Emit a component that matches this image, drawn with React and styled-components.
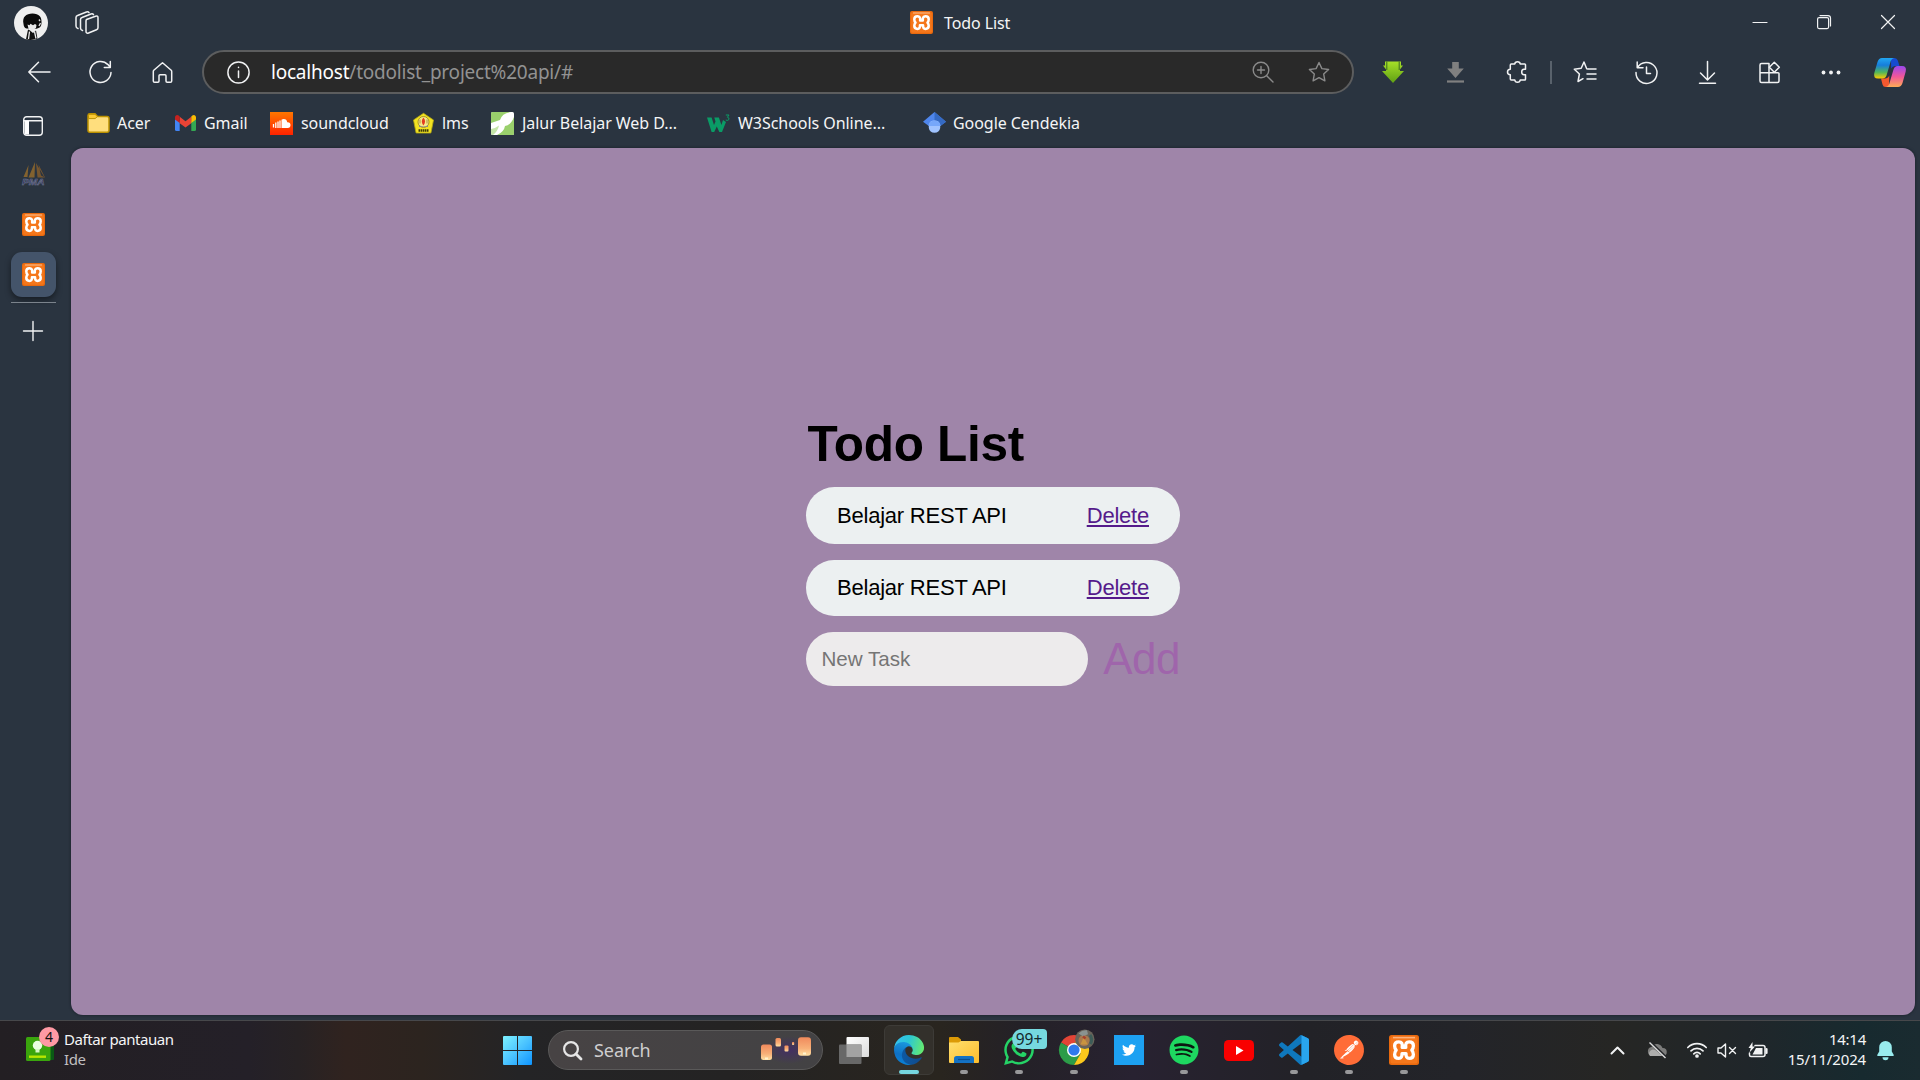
import React from "react";
import styled, { createGlobalStyle } from "styled-components";
import { FaTwitter, FaWhatsapp } from "react-icons/fa";
import { SiSpotify, SiPostman } from "react-icons/si";

const ui = `"Noto Sans", "Open Sans", sans-serif`;
const page = `"Liberation Sans", Arial, sans-serif`;

const GlobalStyle = createGlobalStyle`
  * { box-sizing: border-box; }
  body { margin: 0; background: #2a3440; overflow: hidden; }
  svg { display: block; flex: none; overflow: visible; }
`;

const Screen = styled.div`
  width: 1920px;
  height: 1080px;
  display: flex;
  flex-direction: column;
  font-family: ${ui};
  color: #fff;
`;

const Browser = styled.div`
  height: 1020px;
  display: flex;
  flex-direction: column;
  background: #2a3440;
`;

const TitleBar = styled.header`
  height: 44px;
  display: grid;
  grid-template-columns: 910px 1fr 192px;
  align-items: center;
`;

const TitleLeft = styled.div`
  display: flex;
  align-items: center;
  gap: 27px;
  padding: 2px 0 0 14px;
`;

const Label = styled.span`
  font-size: ${(p) => p.$size || 16}px;
  letter-spacing: ${(p) => p.$ls || 0}px;
  color: ${(p) => p.$color || "#f4f5f6"};
  line-height: 22px;
  white-space: nowrap;
`;

const WindowTitle = styled.div`
  display: flex;
  align-items: center;
  gap: 11px;
  padding-top: 1px;
`;

const WindowButtons = styled.div`
  display: grid;
  grid-template-columns: repeat(3, 64px);
  justify-items: center;
`;

const Toolbar = styled.nav`
  height: 56px;
  display: flex;
  align-items: center;
  padding-left: 8px;
`;

const Slot = styled.div`
  width: ${(p) => p.$w || 61.5}px;
  height: 44px;
  display: flex;
  align-items: center;
  justify-content: center;
  flex: none;
`;

const AddressBar = styled.div`
  width: 1152px;
  height: 44px;
  margin: 0 8px 0 9.5px;
  border: 2px solid #5c5d5e;
  border-radius: 22px;
  background: #292929;
  display: flex;
  align-items: center;
  padding: 0 22px 0 23px;
`;

const Url = styled.div`
  flex: 1;
  padding-left: 21px;
  font-size: 19px;
  letter-spacing: ${(p) => p.$ls}px;
  line-height: 26px;
  color: #929292;
  white-space: nowrap;
  b { font-weight: 400; color: #fff; }
`;

const AddressTools = styled.div`
  display: flex;
  gap: 34px;
  align-items: center;
`;

const Divider = styled.div`
  width: 2px;
  height: 23px;
  margin: 0 2px 0 2px;
  background: #59626c;
`;

const Body = styled.div`
  flex: 1;
  display: flex;
  min-height: 0;
`;

const Sidebar = styled.aside`
  width: 71px;
  padding: 0 15px 0 11px;
  display: flex;
  flex-direction: column;
`;

const SideSlot = styled.div`
  height: ${(p) => p.$h}px;
  padding-right: ${(p) => p.$shift || 0}px;
  display: flex;
  align-items: center;
  justify-content: center;
`;

const ActiveTab = styled.div`
  width: 45px;
  height: 45px;
  border-radius: 11px;
  background: #44546a;
  box-shadow: 0 3px 6px rgba(0, 0, 0, 0.45);
  display: flex;
  align-items: center;
  justify-content: center;
`;

const SideLine = styled.div`
  height: 1px;
  margin: 5px 0 0;
  background: #7b838c;
`;

const MainColumn = styled.div`
  flex: 1;
  display: flex;
  flex-direction: column;
`;

const Bookmarks = styled.div`
  height: 48px;
  padding: 0 0 2px 16px;
  display: flex;
  align-items: center;
`;

const Bookmark = styled.div`
  width: ${(p) => p.$w}px;
  display: flex;
  align-items: center;
  gap: ${(p) => p.$gap || 7}px;
`;

const Viewport = styled.main`
  width: 1844px;
  height: 867px;
  border-radius: 12px;
  background: #9f85a9;
  box-shadow: 0 0 3px rgba(10, 14, 20, 0.6);
  padding-top: 267px;
  font-family: ${page};
  color: #000;
`;

const Todo = styled.section`
  width: 374px;
  margin: 0 auto 0 735px;
  display: flex;
  flex-direction: column;
  gap: 16px;
`;

const Heading = styled.h1`
  margin: 0 0 -1px 1.5px;
  font-size: 49.5px;
  letter-spacing: -0.3px;
  line-height: 57px;
  font-weight: 700;
  white-space: nowrap;
`;

const TodoItem = styled.div`
  height: 56.5px;
  border-radius: 29px;
  background: #ecf0f1;
  padding: 1px 31px 0 31px;
  display: flex;
  align-items: center;
  justify-content: space-between;
  font-size: 22px;
  letter-spacing: -0.22px;
`;

const DeleteLink = styled.a`
  color: #551a8b;
  text-decoration: underline;
`;

const NewTaskRow = styled.form`
  display: flex;
  align-items: center;
  justify-content: space-between;
  height: 54px;
`;

const NewTask = styled.input`
  width: 282px;
  height: 54px;
  border: 0;
  border-radius: 27px;
  background: #edebec;
  padding: 0 15.5px;
  font-family: ${page};
  font-size: 20.6px;
  &::placeholder { color: #757575; opacity: 1; }
`;

const AddButton = styled.button`
  border: 0;
  padding: 0;
  background: none;
  font-family: ${page};
  font-size: 44px;
  letter-spacing: -0.5px;
  line-height: 54px;
  color: #9f65ab;
`;

const Taskbar = styled.footer`
  height: 60px;
  border-top: 1px solid #47484b;
  padding-bottom: 1px;
  background: linear-gradient(90deg, #231f23 0%, #242028 13%, #272224 15.5%, #30231f 18%, #2c241f 22%, #242426 27%, #242323 38%, #29251f 49%, #242127 53%, #282231 59%, #222227 68%, #232429 76%, #262624 84%, #20262a 91%, #172a2f 97%, #1a2b30 100%);
  display: flex;
  align-items: center;
`;

const Widget = styled.div`
  width: 490px;
  padding-left: 26px;
  display: flex;
  align-items: center;
`;

const WidgetIcon = styled.div`
  position: relative;
  width: 38px;
  height: 24px;
  margin-bottom: 2px;
`;

const CountBadge = styled.span`
  position: absolute;
  left: 13px;
  top: -10px;
  width: 20px;
  height: 20px;
  border-radius: 50%;
  background: #ff99a4;
  color: #111;
  font-size: 14px;
  line-height: 20px;
  text-align: center;
`;

const WidgetText = styled.div`
  display: flex;
  flex-direction: column;
  margin-bottom: 3px;
  span { line-height: 20px; }
`;

const Search = styled.div`
  width: 275px;
  height: 40px;
  margin: 0 3.5px 0 3px;
  border: 1px solid #5a5959;
  border-radius: 20px;
  background: linear-gradient(90deg, #474344, #434244);
  display: flex;
  align-items: center;
  padding: 0 9px 0 14px;
  gap: 12px;
`;

const SearchText = styled.span`
  flex: 1;
  padding-bottom: 1px;
  font-size: 18px;
  line-height: 24px;
  letter-spacing: ${(p) => p.$ls}px;
  color: #cfcecf;
`;

const TaskButton = styled.div`
  position: relative;
  width: 55px;
  height: 50px;
  display: flex;
  align-items: center;
  justify-content: center;
  &::before {
    content: "";
    position: absolute;
    inset: 0 2.5px;
    border-radius: 6px;
    border: 1px solid ${(p) => (p.$active ? "#3d3b37" : "transparent")};
    background: ${(p) => (p.$active ? "#33302b" : "transparent")};
  }
  &::after {
    content: "";
    position: absolute;
    bottom: 1px;
    width: ${(p) => (p.$active ? 20 : p.$running ? 8 : 0)}px;
    height: 4px;
    border-radius: 2px;
    background: ${(p) => (p.$active ? "#76d6df" : "#98989a")};
  }
  > svg { position: relative; }
`;

const UnreadBadge = styled.span`
  position: absolute;
  left: 20px;
  top: 4px;
  width: 35px;
  height: 20px;
  border-radius: 10px 4px 4px 10px;
  background: #76d9df;
  color: #14282a;
  font-size: 15.5px;
  letter-spacing: -0.1px;
  line-height: 20px;
  text-align: center;
`;

const Tray = styled.div`
  margin-left: auto;
  padding-right: 26px;
  display: flex;
  align-items: center;
`;

const TrayItem = styled.div`
  width: ${(p) => p.$w}px;
  display: flex;
  justify-content: center;
`;

const Clock = styled.div`
  width: 87px;
  margin: 0 11px 3px 0;
  display: flex;
  flex-direction: column;
  align-items: flex-end;
  span { line-height: 20px; }
`;

function Svg({ w = 24, h, box, sw = 1.6, color = "#f1f2f3", children }) {
  return (
    <svg
      width={w}
      height={h || w}
      viewBox={box || `0 0 ${w} ${h || w}`}
      fill="none"
      stroke={color}
      strokeWidth={sw}
      strokeLinecap="round"
      strokeLinejoin="round"
    >
      {children}
    </svg>
  );
}

function Xampp({ size = 23 }) {
  return (
    <svg width={size} height={size} viewBox="0 0 30 30">
      <rect width="30" height="30" rx="2.5" fill="#e8690e" />
      <rect x="1.5" y="1.5" width="27" height="27" rx="2" fill="#f5771b" />
      <path d="M4 2.6h22" stroke="#fbb27c" strokeWidth="1.6" />
      <path
        d="M13.200 12.400Q14 6.800 9.800 6.800Q5.600 6.800 5.600 10.800Q5.600 13.500 7.200 15.200Q5.600 17 5.600 19.400Q5.600 23.400 9.800 23.400Q13.200 23.400 13 18.600H17Q16.800 23.400 20.200 23.400Q24.400 23.400 24.400 19.400Q24.400 17 22.800 15.200Q24.400 13.500 24.400 10.800Q24.400 6.800 20.200 6.800Q16 6.800 16.800 12.400z"
        fill="none"
        stroke="#fff"
        strokeWidth="3.300"
        strokeLinejoin="round"
      />
    </svg>
  );
}

function Avatar() {
  return (
    <svg width="34" height="34" viewBox="0 0 34 34">
      <circle cx="17" cy="17" r="17" fill="#efefef" />
      <path d="M9.5 18C8 11 12 7.500 18.500 7.500S28 11 27.500 17c0 3-1.500 4.500-3 5l-2 .7-10-.2c-2-.6-2.700-2-3-4.500z" fill="#0b0b0b" />
      <path d="M13.500 18.500l2 .8 1-1.500 2.500 1.500 2-1.300 1.500 1-.5 3-3.500 2.200-4-1.500z" fill="#e9e9e9" />
      <path d="M14 23.500l-2 9.800q5 1.400 11.500-.5L22 24.500l-3 2.500-3-2.500z" fill="#111" />
      <path d="M15.500 25.500l-1 7.500M20.500 25.500l1.500 7" stroke="#eee" strokeWidth="1.300" />
      <path d="M25 13.500l1 1.500M26.500 17l-1.500 3" stroke="#ddd" strokeWidth="1.400" />
    </svg>
  );
}

const StarPath = "M11 1.500l2.900 6.100 6.700.9-4.900 4.600 1.200 6.700L11 16.600l-5.900 3.200 1.200-6.700L1.400 8.500l6.700-.9z";

function Folder() {
  return (
    <svg width="23" height="20" viewBox="0 0 23 20">
      <path d="M1 3.500V2.500A1.800 1.800 0 0 1 2.800.8H8l2.600 2.700H20a2 2 0 0 1 2 2v11.700a2 2 0 0 1-2 2H3a2 2 0 0 1-2-2z" fill="#ffde7d" stroke="#bd9200" strokeWidth="1.500" />
      <path d="M1.500 5.600h6.600l2.400-2.100L8 1.300H2.800L1.500 2.500z" fill="#fbc935" stroke="#bd9200" strokeWidth="1" />
    </svg>
  );
}

function Gmail() {
  return (
    <svg width="21" height="16" viewBox="0 0 21 16">
      <path d="M0 4v10.500Q0 16 1.500 16H4.700V6.500z" fill="#4285f4" />
      <path d="M21 4v10.500q0 1.500-1.500 1.500h-3.200V6.500z" fill="#34a853" />
      <path d="M4.700 1.800L10.500 6.300l5.800-4.500v6.400l-5.800 4.400-5.800-4.400z" fill="#ea4335" />
      <path d="M0 2.400C0 .4 2.100-.7 3.700.6l1 .8v6.700L0 4.600z" fill="#c5221f" />
      <path d="M21 2.400c0-2-2.100-3.100-3.700-1.800l-1 .8v6.700L21 4.600z" fill="#fbbc04" />
    </svg>
  );
}

function SoundCloud() {
  return (
    <svg width="23" height="23" viewBox="0 0 23 23">
      <defs>
        <linearGradient id="sc" x1="0" y1="0" x2="0" y2="1">
          <stop offset="0" stopColor="#ff7700" />
          <stop offset="1" stopColor="#ff2200" />
        </linearGradient>
      </defs>
      <rect width="23" height="23" fill="url(#sc)" />
      <path d="M11.500 16V7.800q1-.8 2.200-.8 3 0 3.500 3.200 3.300-.3 3.300 2.900 0 2.900-2.800 2.900z" fill="#fff" />
      <path d="M3.500 12v3.500M5.800 10.500V16M8 9.500V16M10 8.500V16" stroke="#fff" strokeWidth="1.300" />
    </svg>
  );
}

function Campus() {
  return (
    <svg width="21" height="21" viewBox="0 0 21 21">
      <path d="M10.500.3L20.500 7l-2.600 13H3.100L.5 7z" fill="#f3e322" stroke="#b5a912" strokeWidth=".8" strokeLinejoin="round" />
      <circle cx="10.500" cy="9" r="5.500" fill="#f7e98a" stroke="#a08a20" strokeWidth=".9" />
      <path d="M10.500 4.500c2.200 2.500 2 5.500-.1 8-2-2.500-2.300-5.500.1-8z" fill="#e43b1f" />
      <path d="M7 6.500v4M14 6.500v4" stroke="#b9a24a" strokeWidth="1.200" />
      <path d="M6 12q4.500 3 9 0v2h-9z" fill="#8a8a86" />
      <path d="M5.500 17.500h10" stroke="#3a3708" strokeWidth="2.400" strokeDasharray="1.600 .5" />
    </svg>
  );
}

function Dicoding() {
  return (
    <svg width="23" height="23" viewBox="0 0 23 23">
      <rect width="23" height="23" rx="1.500" fill="#fff" />
      <path d="M0 1.500Q0 0 1.500 0H20q-9 1-11 8L0 11z" fill="#9ad06c" />
      <path d="M23 5v16.500q0 1.500-1.500 1.500H6q7-3 8-9 6-1 9-9z" fill="#9ad06c" />
      <path d="M0 17q5-1 8-3.500Q7 19 2 23h-.5Q0 23 0 21.500z" fill="#c5e6a8" />
    </svg>
  );
}

function W3() {
  return (
    <svg width="23" height="19" viewBox="0 0 23 19">
      <path d="M0 3.500h4.600l2.400 7.500 1.500-3.500-1.200-4h4.600l2.500 7.500 1.600-5 3 2-4 10h-2.700l-2.500-5.500L7.200 18H4.600z" fill="#0a9b66" />
      <path d="M18.800 1h3.200l-1.600 2.300q2 .2 1.600 2-.8 1.800-3.200.8" fill="none" stroke="#0a9b66" strokeWidth="1" />
    </svg>
  );
}

function Scholar() {
  return (
    <svg width="23" height="22" viewBox="0 0 23 22">
      <path d="M11.500 0L0 9.800l5.500 4 6-4.300 6 4.300 5.500-4z" fill="#4f86ec" />
      <path d="M11.500 0v10l6 4 5.500-4.200z" fill="#356ac3" />
      <path d="M5.800 13a5.800 5.500 0 0 1 11.400 0v3a5.800 5.800 0 0 1-11.400 0z" fill="#a0c3ff" />
      <path d="M5.500 14a6 5.500 0 0 1 12 0z" fill="#76a7fa" />
    </svg>
  );
}

function Sails() {
  return (
    <svg width="23" height="23" viewBox="0 0 23 23">
      <path d="M6.500 3L1.500 15h4zM13 0L6.500 15.500h6z" fill="#83622f" />
      <path d="M14 1l1.500 14.500h7zM16.500 2.500l6.500 13-4-2z" fill="#76562f" />
      <text x="0" y="22.500" fontFamily="Liberation Sans, sans-serif" fontSize="9.500" fontWeight="700" fontStyle="italic" textLength="22.500" lengthAdjust="spacingAndGlyphs" fill="#292f55" stroke="#777c96" strokeWidth=".5">PMA</text>
    </svg>
  );
}

function Copilot() {
  return (
    <svg width="32" height="29" viewBox="0 0 32 29">
      <defs>
        <linearGradient id="cpa" x1="0" y1="0" x2="0" y2="1">
          <stop offset="0" stopColor="#22a7f2" />
          <stop offset=".35" stopColor="#167ddb" />
          <stop offset=".7" stopColor="#52b759" />
          <stop offset="1" stopColor="#ffcb00" />
        </linearGradient>
        <linearGradient id="cpb" x1="0" y1="0" x2="0" y2="1">
          <stop offset="0" stopColor="#9a48ef" />
          <stop offset=".5" stopColor="#f0569a" />
          <stop offset="1" stopColor="#ffac55" />
        </linearGradient>
      </defs>
      <path d="M17 0h3.500q2.500 0 3.300 2.500L25.500 8h-4.300q-3 0-4 2.500z" fill="#164bd0" />
      <path d="M15 29h-3.500q-2.300 0-3-2.500L7 20.500h4q3 0 4.300-3z" fill="#f4582f" />
      <path d="M8 0h12q-2.300.3-3.200 3L12.500 17.500Q11.500 20.500 8.500 20.500H4Q-1 20.500.3 15L3.500 4Q4.800 0 8 0z" fill="url(#cpa)" />
      <path d="M24 29H12q2.300-.3 3.200-3l4.300-14.500q1-3.500 4-3.500H28q5 0 3.700 5.500L28.500 25Q27.200 29 24 29z" fill="url(#cpb)" />
    </svg>
  );
}

function WindowsLogo() {
  return (
    <svg width="29" height="29" viewBox="0 0 29 29">
      <defs>
        <linearGradient id="win" x1="0" y1="0" x2="1" y2="1">
          <stop offset="0" stopColor="#7df2ff" />
          <stop offset=".5" stopColor="#4cc4ff" />
          <stop offset="1" stopColor="#0e94ff" />
        </linearGradient>
      </defs>
      <path d="M1 0h13v14H0V1q0-1 1-1zM15 0h13q1 0 1 1v13H15zM0 15h14v14H1q-1 0-1-1zM15 15h14v13q0 1-1 1H15z" fill="url(#win)" />
    </svg>
  );
}

function Lanterns() {
  return (
    <svg width="52" height="26" viewBox="0 0 52 26">
      <defs>
        <linearGradient id="lan" x1="0" y1="0" x2="0" y2="1">
          <stop offset="0" stopColor="#f08a5c" />
          <stop offset=".6" stopColor="#f8b078" />
          <stop offset="1" stopColor="#ffe0a4" />
        </linearGradient>
        <radialGradient id="night">
          <stop offset="0" stopColor="#432f63" />
          <stop offset="1" stopColor="#432f63" stopOpacity="0" />
        </radialGradient>
      </defs>
      <ellipse cx="28" cy="13" rx="24" ry="14" fill="url(#night)" />
      <g fill="url(#lan)">
        <rect x="0" y="7.500" width="11" height="15.500" rx="2.500" />
        <rect x="14.500" y="1" width="5.500" height="8.500" rx="1.500" />
        <rect x="23.500" y="8.500" width="4" height="6" rx="1" />
        <rect x="31" y="5" width="2.200" height="3" rx=".8" />
        <rect x="37" y=".3" width="13" height="18.500" rx="3" />
      </g>
      <path d="M4 21.500h3M42 16.500h3" stroke="#fff3cf" strokeWidth="2" />
    </svg>
  );
}

function TaskView() {
  return (
    <svg width="30" height="27" viewBox="0 0 30 27">
      <defs>
        <linearGradient id="tv" x1="0" y1="0" x2="1" y2="1">
          <stop offset="0" stopColor="#fff" />
          <stop offset="1" stopColor="#dcdcdc" />
        </linearGradient>
      </defs>
      <rect x="7.500" y="0" width="22.500" height="20" rx="1" fill="url(#tv)" />
      <rect x="0" y="7.500" width="22.500" height="19.500" rx="1" fill="#686868" />
      <rect x="7.500" y="7.500" width="15" height="12.500" fill="#a3a3a3" />
    </svg>
  );
}

function Edge() {
  return (
    <svg width="30" height="30" viewBox="0 0 256 256">
      <defs>
        <linearGradient id="e1" x1="0" y1="0" x2="1" y2="0">
          <stop offset="0" stopColor="#0c59a4" />
          <stop offset="1" stopColor="#114a8b" />
        </linearGradient>
        <linearGradient id="e2" x1=".6" y1="0" x2=".4" y2="1">
          <stop offset="0" stopColor="#1b9de2" />
          <stop offset=".6" stopColor="#0f70c4" />
          <stop offset="1" stopColor="#0882d8" />
        </linearGradient>
        <linearGradient id="e3" x1="0" y1=".4" x2="1" y2=".6">
          <stop offset="0" stopColor="#35c1f1" />
          <stop offset=".45" stopColor="#2cc7d4" />
          <stop offset="1" stopColor="#66eb6e" />
        </linearGradient>
      </defs>
      <path d="M231 190.500c-3.400 1.800-6.900 3.400-10.500 4.700a101.700 101.700 0 0 1-35.900 6.400c-47.300 0-88.500-32.500-88.500-74.300a31.500 31.500 0 0 1 16.400-27.300c-42.800 1.800-53.800 46.400-53.800 72.500 0 73.900 68.100 81.400 82.800 81.400 7.900 0 19.800-2.300 27-4.600l1.300-.4a128.300 128.300 0 0 0 66.600-52.800 4 4 0 0 0-5.400-5.600z" fill="url(#e1)" />
      <path d="M105.700 241.400a79.200 79.200 0 0 1-22.700-21.300 80.700 80.700 0 0 1 29.500-120c3.200-1.500 8.500-4.100 15.600-4a32.400 32.400 0 0 1 25.700 13 31.900 31.900 0 0 1 6.300 18.700c0-.2 24.500-79.600-80-79.600C36.200 48.200.1 89.900.1 126.400a130.200 130.200 0 0 0 12.100 56 128 128 0 0 0 156.400 67 75.500 75.500 0 0 1-62.800-8z" fill="url(#e2)" />
      <path d="M152.300 148.900c-.8 1-3.300 2.500-3.300 5.700 0 2.600 1.700 5.200 4.800 7.300 14.400 10.100 41.700 8.700 41.800 8.700 10.700 0 21.200-2.900 30.500-8.300a61.800 61.800 0 0 0 30.400-53.100c.3-22.400-8-37.300-11.300-43.900C223.900 23.900 177.700 0 127.500 0A128 128 0 0 0 0 126.200c.5-36.500 36.800-66 80-66 3.500 0 23.500.3 42 10.100a72.600 72.600 0 0 1 30.800 29.300c6.100 10.600 7.200 24.100 7.200 29.500s-2.700 13.300-7.700 19.800z" fill="url(#e3)" />
    </svg>
  );
}

function Explorer() {
  return (
    <svg width="30" height="26" viewBox="0 0 30 26">
      <defs>
        <linearGradient id="fx" x1="0" y1="0" x2="1" y2="1">
          <stop offset="0" stopColor="#ffdf6e" />
          <stop offset="1" stopColor="#fdbd2c" />
        </linearGradient>
      </defs>
      <path d="M0 1q0-1 1-1h8l3 2.500V8H0z" fill="#dc9a06" />
      <path d="M0 5.500h9.500L12 4h17q1 0 1 1v20q0 1-1 1H1q-1 0-1-1z" fill="url(#fx)" />
      <path d="M5 26v-4.500q0-2.500 2.500-2.500h15q2.500 0 2.500 2.500V26z" fill="#1472c4" />
      <path d="M9 22.500h12" stroke="#0b4f91" strokeWidth="1.200" />
    </svg>
  );
}

function Chrome() {
  return (
    <svg width="30" height="30" viewBox="0 0 30 30">
      <path d="M15 15L2 7.500A15 15 0 0 1 28 7.500H15z" fill="#e24436" />
      <path d="M15 15L2 7.500A15 15 0 0 0 15 30l6.500-11.200z" fill="#2c9c48" />
      <path d="M28 7.500H15L21.500 18.800 15 30A15 15 0 0 0 28 7.500z" fill="#fcc81c" />
      <circle cx="15" cy="15" r="7" fill="#fff" />
      <circle cx="15" cy="15" r="5.600" fill="#2f79ec" />
      <circle cx="25.800" cy="4.200" r="9.700" fill="#69645a" />
      <circle cx="25" cy="5.500" r="5.500" fill="#a8794c" />
      <path d="M19.500-1.500q4-4 8.500-3.200l1 4-5 2z" fill="#8a9390" />
      <path d="M21.500 9.500l3.300-7.500 4 7.500z" fill="#c99440" />
      <path d="M24 1.500l2.500 2" stroke="#a5402d" strokeWidth="2.500" />
      <path d="M31 0q3 4 .5 9" stroke="#3d5c58" strokeWidth="3" fill="none" />
    </svg>
  );
}

function Twitter() {
  return (
    <svg width="30" height="30" viewBox="0 0 30 30">
      <rect width="30" height="30" fill="#1da1f2" />
      <FaTwitter x="8" y="8" size="14" color="#fff" />
    </svg>
  );
}

function Spotify() {
  return (
    <svg width="30" height="30" viewBox="0 0 30 30">
      <circle cx="15" cy="15" r="12" fill="#0c1710" />
      <SiSpotify x="0.500" y="0.500" size="29" color="#1ed760" />
    </svg>
  );
}

function YouTube() {
  return (
    <svg width="30" height="21" viewBox="0 0 30 21">
      <rect width="30" height="21" rx="4.500" fill="#f90000" />
      <path d="M12 6v9l7.500-4.500z" fill="#fff" />
    </svg>
  );
}

function VsCode() {
  return (
    <svg width="30" height="30" viewBox="0 0 24 24">
      <path d="M23.150 2.587L18.210.21a1.494 1.494 0 0 0-1.705.29l-9.460 8.630-4.120-3.128a.999.999 0 0 0-1.276.057L.327 7.261A1 1 0 0 0 .326 8.740L3.899 12 .326 15.260a1 1 0 0 0 .001 1.479L1.650 17.940a.999.999 0 0 0 1.276.057l4.120-3.128 9.460 8.630a1.492 1.492 0 0 0 1.704.290l4.942-2.377A1.500 1.500 0 0 0 24 20.060V3.939a1.500 1.500 0 0 0-.850-1.352zm-5.146 14.861L10.826 12l7.178-5.448v10.896z" fill="#0f78bd" />
      <path d="M18.004.12l5.146 2.467A1.500 1.500 0 0 1 24 3.939V20.060a1.500 1.500 0 0 1-.85 1.352l-4.942 2.377-.204.080z" fill="#29a5ee" />
    </svg>
  );
}

function Postman() {
  return (
    <svg width="30" height="30" viewBox="0 0 30 30">
      <circle cx="15" cy="15" r="13" fill="#fff" />
      <SiPostman x="0" y="0" size="30" color="#ff6c37" />
    </svg>
  );
}

const bookmarks = [
  { icon: <Folder />, text: "Acer", w: 88 },
  { icon: <Gmail />, text: "Gmail", w: 95, gap: 8 },
  { icon: <SoundCloud />, text: "soundcloud", w: 143, gap: 8 },
  { icon: <Campus />, text: "lms", w: 78, gap: 8 },
  { icon: <Dicoding />, text: "Jalur Belajar Web D...", w: 216, gap: 8 },
  { icon: <W3 />, text: "W3Schools Online...", w: 216, gap: 8 },
  { icon: <Scholar />, text: "Google Cendekia", w: 170, gap: 7 },
];

const todos = ["Belajar REST API", "Belajar REST API"];

export default function App() {
  return (
    <Screen>
      <GlobalStyle />
      <Browser>
        <TitleBar>
          <TitleLeft>
            <Avatar />
            <Svg w={25} h={25} sw={1.5}>
              <path d="M11.500 8.500l9-3.300q2.500-.7 2.500 1.500v10q0 1.500-1.500 2l-8 3.300q-2.500.8-2.500-1.700V10q0-1 .5-1.500z" />
              <path d="M7.500 19.500q-2-.5-2-2.500V8.500Q5.500 7 7 6.500L16 3q1.800-.5 2.500.7" />
              <path d="M3 17.500q-2-.5-2-2.500V6.500Q1 5 2.500 4.500L11.500 1q1.800-.5 2.500.7" />
            </Svg>
          </TitleLeft>
          <WindowTitle>
            <Xampp size={23} />
            <Label $ls={-0.1}>Todo List</Label>
          </WindowTitle>
          <WindowButtons>
            <Svg w={14} sw={1.2}><path d="M0 7.500h14" /></Svg>
            <Svg w={14} sw={1.2}>
              <rect x=".6" y="2.600" width="11" height="11" rx="1.500" />
              <path d="M3 .6h8q2.500 0 2.500 2.500V11" />
            </Svg>
            <Svg w={14} sw={1.2}><path d="M.5.5l13 13M13.500.5l-13 13" /></Svg>
          </WindowButtons>
        </TitleBar>

        <Toolbar>
          <Slot><Svg w={22} sw={1.5}><path d="M22 11H.8M10.500 1.300L.8 11l9.700 9.700" /></Svg></Slot>
          <Slot><Svg w={22} sw={1.5}><path d="M22 11.500A10.500 10.500 0 1 1 19 3.600L21 6M21.300.5v6h-6" /></Svg></Slot>
          <Slot>
            <Svg w={20} h={21} sw={1.5}>
              <path d="M10.500.8L1.800 8.200Q1.300 8.700 1.300 9.500V19q0 1.300 1.300 1.300h3.300q1.100 0 1.100-1.200v-5.400q0-1 1-1h5q1 0 1 1v5.400q0 1.200 1.100 1.200h3.300q1.300 0 1.300-1.300V9.500q0-.8-.5-1.300z" />
            </Svg>
          </Slot>
          <AddressBar>
            <Svg w={23} sw={1.5}>
              <circle cx="11.500" cy="11.500" r="10.600" />
              <path d="M11.500 10v6.500M11.500 6.300v.3" />
            </Svg>
            <Url $ls={-0.22}><b>localhost</b>/todolist_project%20api/#</Url>
            <AddressTools>
              <Svg w={22} sw={1.4} color="#8a8a8a">
                <circle cx="9" cy="9" r="7.800" />
                <path d="M14.700 14.700L21 21M5.500 9h7M9 5.500v7" />
              </Svg>
              <Svg w={22} sw={1.4} color="#8a8a8a"><path d={StarPath} /></Svg>
            </AddressTools>
          </AddressBar>
          <Slot $w={62}>
            <svg width="22" height="22" viewBox="0 0 22 22">
              <defs>
                <linearGradient id="dl" x1="0" y1="0" x2="0" y2="1">
                  <stop offset="0" stopColor="#a6e028" />
                  <stop offset="1" stopColor="#5f9f14" />
                </linearGradient>
              </defs>
              <path d="M3 .5h16v4h2L18 8.500v1.500h4L11 22 0 10h4V8.500L1 4.500h2z" fill="url(#dl)" />
              <path d="M4.800.5v8.500M17.200.5v8.500" stroke="#3d6a22" strokeWidth="1" />
            </svg>
          </Slot>
          <Slot $w={62}>
            <svg width="17" height="21" viewBox="0 0 17 21">
              <path d="M5.200 0h6.600v6.500h5L8.500 16 .2 6.500h5z" fill="#808080" />
              <path d="M0 19.500h17" stroke="#808080" strokeWidth="2.200" />
            </svg>
          </Slot>
          <Slot $w={62}>
            <Svg w={21} h={22} sw={1.5}>
              <path d="M4.300 3H7.800q.2-2.200 2.700-2.200T13.200 3h4.500q.8 0 .8.800v4.500h-1.500q-2.300.2-2.300 2.700t2.300 2.700h1.500v4.500q0 .8-.8.800h-4.500q-.2 2.200-2.700 2.200T7.800 19H4.300q-1 0-1-1v-4.300Q.5 13.500.5 11t2.800-2.700V4q0-1 1-1z" />
            </Svg>
          </Slot>
          <Divider />
          <Slot>
            <Svg w={24} h={22} sw={1.5}>
              <path d="M15 8l-1.300-.3L11 1 8.200 7.300l-6.900.9 5.100 4.800L5 20.500l5-2.800M15.500 8H23M14 13h9M14 18h9" />
            </Svg>
          </Slot>
          <Slot>
            <Svg w={23} sw={1.5}>
              <path d="M2.500 6.500A10.500 10.500 0 1 1 1 11.500M2.200 1v5.800H8M11.500 6v6.500h4" />
            </Svg>
          </Slot>
          <Slot>
            <Svg w={17} h={23} sw={1.5}><path d="M8.500.5v18M1.500 12l7 7 7-7M.5 22.300h16" /></Svg>
          </Slot>
          <Slot>
            <Svg w={21} h={21} sw={1.5}>
              <path d="M10 1.500H2.500Q1 1.500 1 3v16q0 1.500 1.500 1.500h16Q20 20.500 20 19v-7.500q0-.8-1-.8H1M10 1.500v19" />
              <path d="M15.300.3l5 5-5 5-5-5z" />
            </Svg>
          </Slot>
          <Slot>
            <Svg w={20} h={4} sw={0}>
              <g fill="#f1f2f3"><circle cx="2.500" cy="2.500" r="1.900" /><circle cx="10" cy="2.500" r="1.900" /><circle cx="17.500" cy="2.500" r="1.900" /></g>
            </Svg>
          </Slot>
          <Slot $w={57}><Copilot /></Slot>
        </Toolbar>

        <Body>
          <Sidebar>
            <SideSlot $h={51} $shift={2}>
              <Svg w={20} sw={1.4}>
                <rect x=".7" y=".7" width="18.600" height="18.600" rx="3" />
                <path d="M1 4.700h18" />
                <path d="M1.500 5v12q0 1.500 1.500 1.500h3V5z" fill="#fff" stroke="none" />
              </Svg>
            </SideSlot>
            <SideSlot $h={45}><Sails /></SideSlot>
            <SideSlot $h={56}><Xampp /></SideSlot>
            <SideSlot $h={45}><ActiveTab><Xampp /></ActiveTab></SideSlot>
            <SideLine />
            <SideSlot $h={56} $shift={2}><Svg w={20} sw={1.4}><path d="M10 .5v19M.5 10h19" /></Svg></SideSlot>
          </Sidebar>
          <MainColumn>
            <Bookmarks>
              {bookmarks.map((b) => (
                <Bookmark key={b.text} $w={b.w} $gap={b.gap}>
                  {b.icon}
                  <Label $ls={-0.05}>{b.text}</Label>
                </Bookmark>
              ))}
            </Bookmarks>
            <Viewport>
              <Todo>
                <Heading>Todo List</Heading>
                {todos.map((t, i) => (
                  <TodoItem key={i}>
                    <span>{t}</span>
                    <DeleteLink href="#">Delete</DeleteLink>
                  </TodoItem>
                ))}
                <NewTaskRow>
                  <NewTask placeholder="New Task" />
                  <AddButton type="button">Add</AddButton>
                </NewTaskRow>
              </Todo>
            </Viewport>
          </MainColumn>
        </Body>
      </Browser>

      <Taskbar>
        <Widget>
          <WidgetIcon>
            <svg width="28" height="24" viewBox="0 0 28 24">
              <rect x="22" y="1" width="6" height="22" rx="1" fill="#0a5a14" />
              <rect width="24.500" height="24" rx="1.500" fill="#3aa50d" />
              <circle cx="11.500" cy="8.500" r="4.700" fill="#e9ffe0" />
              <path d="M9.500 12h4v3.500h-4z" fill="#d4f7c4" />
              <path d="M3 19.700h17" stroke="#b9e600" strokeWidth="2.400" />
            </svg>
            <CountBadge>4</CountBadge>
          </WidgetIcon>
          <WidgetText>
            <Label $size={15} $ls={-0.43}>Daftar pantauan</Label>
            <Label $size={15} $ls={-0.4} $color="#c0bfc1">Ide</Label>
          </WidgetText>
        </Widget>
        <TaskButton><WindowsLogo /></TaskButton>
        <Search>
          <Svg w={19} sw={2.2} color="#e6e6e6">
            <circle cx="8" cy="8" r="6.900" />
            <path d="M13 13l5 5" strokeWidth="2.800" />
          </Svg>
          <SearchText $ls={-0.05}>Search</SearchText>
          <Lanterns />
        </Search>
        <TaskButton><TaskView /></TaskButton>
        <TaskButton $active><Edge /></TaskButton>
        <TaskButton $running><Explorer /></TaskButton>
        <TaskButton $running>
          <FaWhatsapp size={34} color="#25d366" />
          <UnreadBadge>99+</UnreadBadge>
        </TaskButton>
        <TaskButton $running><Chrome /></TaskButton>
        <TaskButton><Twitter /></TaskButton>
        <TaskButton $running><Spotify /></TaskButton>
        <TaskButton><YouTube /></TaskButton>
        <TaskButton $running><VsCode /></TaskButton>
        <TaskButton $running><Postman /></TaskButton>
        <TaskButton $running><Xampp size={30} /></TaskButton>
        <Tray>
          <TrayItem $w={40}><Svg w={13} h={8} sw={2}><path d="M.5 7.500l6-6 6 6" /></Svg></TrayItem>
          <TrayItem $w={40}>
            <svg width="20" height="16" viewBox="0 0 20 16">
              <path d="M5 14a4.500 4.500 0 0 1-.5-8.900A6 6 0 0 1 15.500 6a4 4 0 0 1 .5 8z" fill="#7c7c7b" />
              <path d="M3 14a4 4 0 0 1 5-6l9 6z" fill="#adadac" />
              <path d="M3 0l16 15.500" stroke="#25272a" strokeWidth="3" />
              <path d="M2.500.5L18.500 16" stroke="#ddd" strokeWidth="1.400" />
            </svg>
          </TrayItem>
          <TrayItem $w={40}>
            <Svg w={20} h={16} sw={1.7}>
              <path d="M.8 5.500a13 13 0 0 1 18.400 0M4 8.800a8.500 8.500 0 0 1 12 0M6.800 11.800a4.500 4.500 0 0 1 6.400 0" />
              <circle cx="10" cy="14" r="1" fill="#fff" />
            </Svg>
          </TrayItem>
          <TrayItem $w={19}>
            <Svg w={19} h={15} sw={1.4}>
              <path d="M1 5h3l4.500-4v13L4 10H1zM12.500 4.500l6 6M18.500 4.500l-6 6" />
            </Svg>
          </TrayItem>
          <TrayItem $w={43}>
            <Svg w={20} h={16} sw={1.5}>
              <path d="M7 3.500h8q2 0 2 2v7q0 2-2 2H3q-1.500 0-1.500-1.500v-2" />
              <path d="M18.500 7v4" strokeWidth="2.200" />
              <path d="M8 6h6.500v6.500H4.500z" fill="#f1f2f3" stroke="none" />
              <path d="M4.500 0L.5 6h2.300L1.500 10.500l5.500-6H4.500z" fill="#f1f2f3" stroke="none" />
            </Svg>
          </TrayItem>
          <Clock>
            <Label $size={15} $ls={-0.25}>14:14</Label>
            <Label $size={15} $ls={-0.15}>15/11/2024</Label>
          </Clock>
          <svg width="17" height="19" viewBox="0 0 17 19">
            <path d="M8.500 0a6.300 6.300 0 0 1 6.300 6.300v4.200l2 3.500q.3 1-.8 1H1q-1.100 0-.8-1l2-3.500V6.300A6.300 6.300 0 0 1 8.500 0zM5.500 16.300h6a3 3 0 0 1-6 0z" fill="#98ecee" />
          </svg>
        </Tray>
      </Taskbar>
    </Screen>
  );
}
